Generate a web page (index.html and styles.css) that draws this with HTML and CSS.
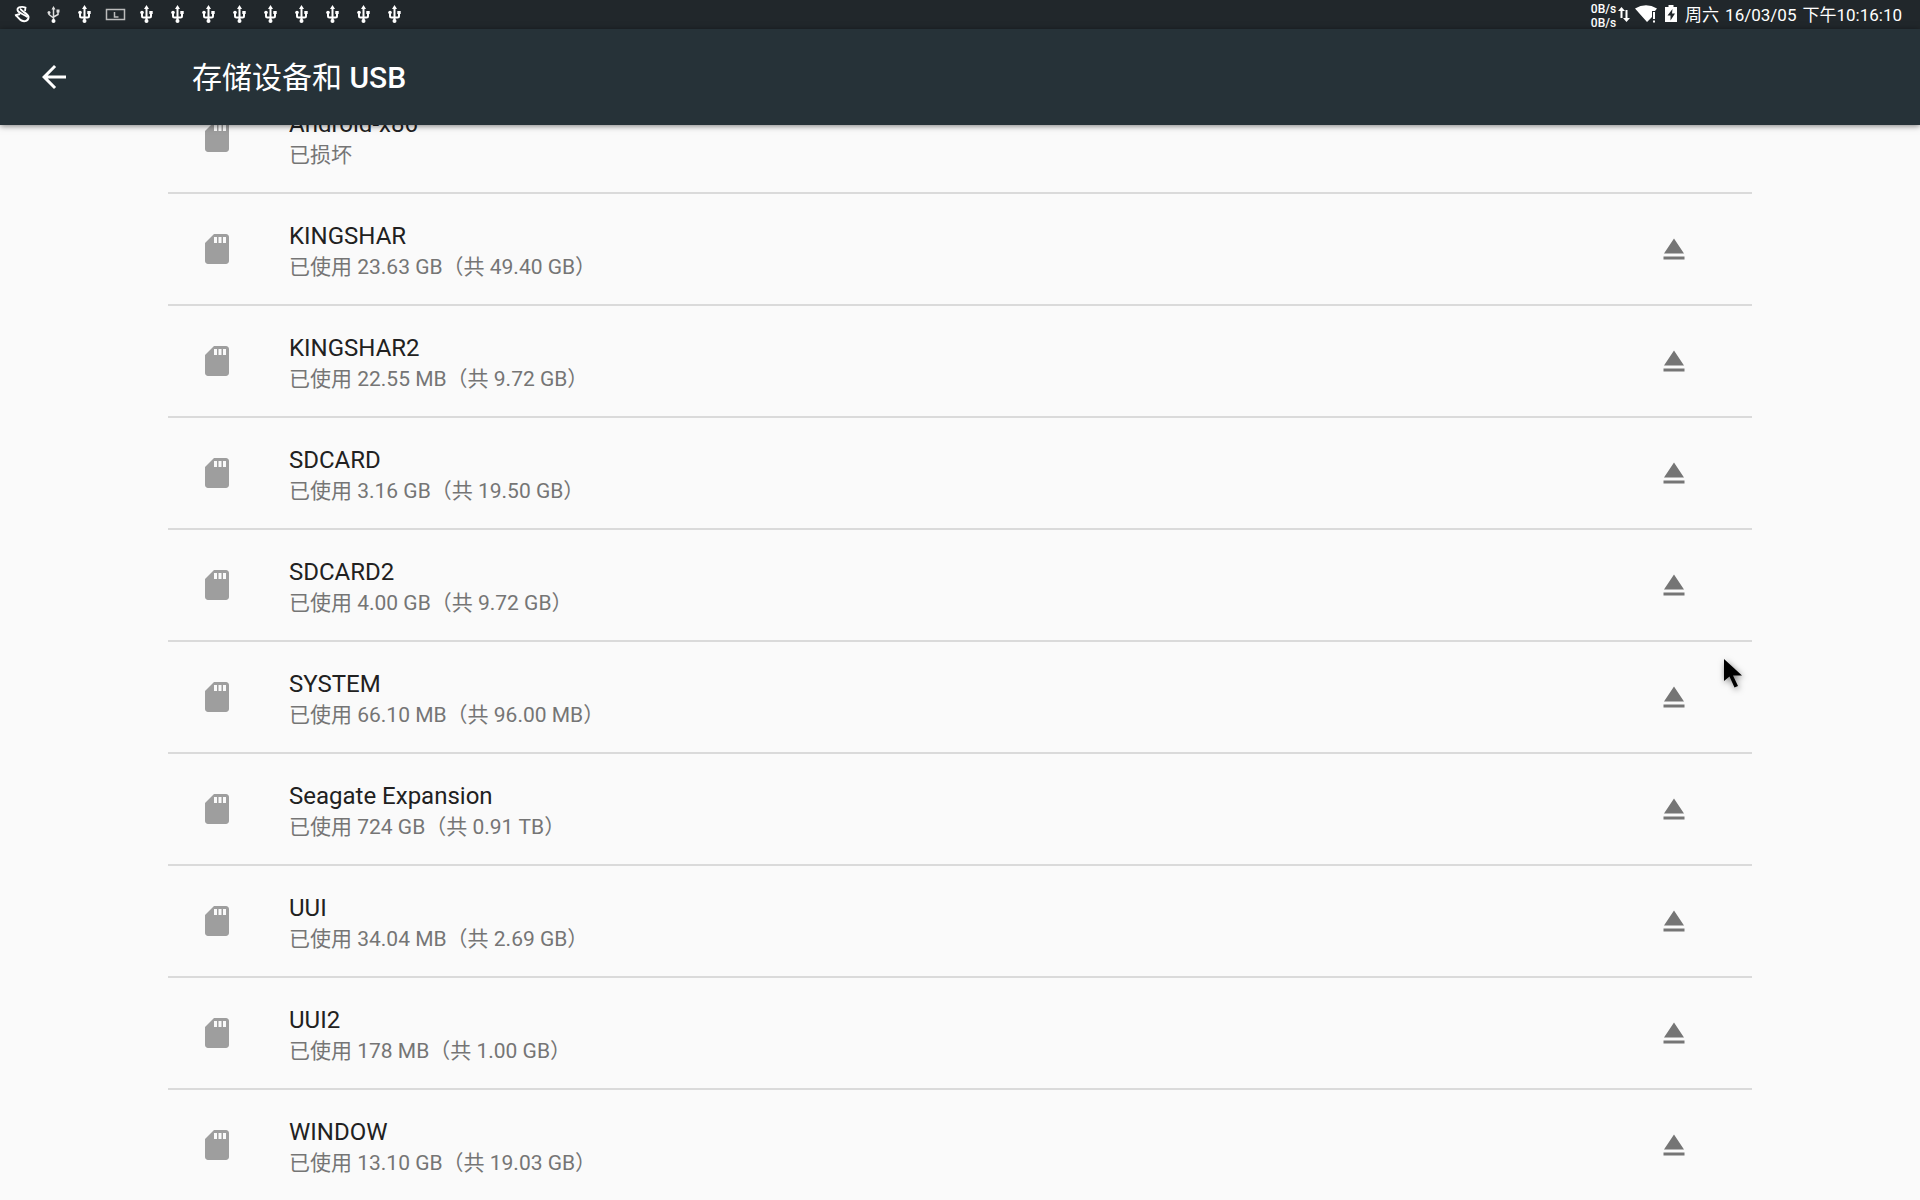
FILE: index.html
```
<!DOCTYPE html>
<html lang="zh-CN">
<head>
  <meta charset="UTF-8">
  <meta name="viewport" content="width=device-width, initial-scale=1">
  <title>存储设备和 USB</title>
  <link rel="stylesheet" href="styles.css">
</head>
<body>

<!-- Shared icons -->
<svg class="hidden">
  <symbol id="usb" viewBox="0 0 24 24">
    <path d="M12.500 5v14M8 9v5q0 1.500 1.500 1.500h6q1.500 0 1.500-1.500v-5" fill="none" stroke="#fff" stroke-width="2"/>
    <path d="M12.500 3l2.500 4h-5z" fill="#fff"/>
    <circle cx="12.500" cy="19" r="2" fill="#fff"/>
    <circle cx="8" cy="10.500" r="1.800" fill="#fff"/>
    <path d="M15.300 9h3.400v3h-3.400z" fill="#fff"/>
  </symbol>
  <symbol id="sd" viewBox="0 0 24 24">
    <path d="M18 2h-8L4.020 8 4 20c0 1.100.9 2 2 2h12c1.100 0 2-.9 2-2V4c0-1.100-.9-2-2-2zm-6 6h-2V4h2v4zm3 0h-2V4h2v4zm3 0h-2V4h2v4z"/>
  </symbol>
  <symbol id="eject" viewBox="0 0 24 24">
    <path d="M5 17h14v2H5zm7-12L5.330 15h13.340z"/>
  </symbol>
</svg>

<div class="status-bar">
  <div class="notifications">
    <svg viewBox="0 0 24 24"><path d="M15 9l.5-3.500C12 4 7 5 7.500 8c.5 3 6 4 10 7" fill="none" stroke="#fff" stroke-width="1.800"/><path d="M11 6.500c-1.500 2 7 5 7.500 8.500 0 4-4 5-7 3.500-2-1-3-3-5-4.500M5 13.500l5-1.500" fill="none" stroke="#fff" stroke-width="2"/></svg>
    <svg viewBox="0 0 24 24"><path d="M12.500 6v13M8 11v1.500l4.500 3.500M17 10v2.500L12.500 15" fill="none" stroke="#ddd" stroke-width="1.500"/><path d="M12.500 4l2 3.500h-4zM15.500 7.500h3v3h-3z" fill="#ddd"/><circle cx="8" cy="10.500" r="1.500" fill="#ddd"/><circle cx="12.500" cy="19" r="2" fill="#fff"/></svg>
    <svg><use href="#usb"/></svg>
    <svg viewBox="0 0 24 24"><path d="M3.500 7.500h18v10h-18zM11.500 10v5h4" fill="none" stroke="#bbb" stroke-width="1.500"/></svg>
    <svg><use href="#usb"/></svg>
    <svg><use href="#usb"/></svg>
    <svg><use href="#usb"/></svg>
    <svg><use href="#usb"/></svg>
    <svg><use href="#usb"/></svg>
    <svg><use href="#usb"/></svg>
    <svg><use href="#usb"/></svg>
    <svg><use href="#usb"/></svg>
    <svg><use href="#usb"/></svg>
  </div>
  <div class="system">
    <div class="speed"><span>0B/s</span><span>0B/s</span></div>
    <svg class="arrows" viewBox="0 0 12 24"><path d="M3.500 18V9M8.500 10v9" stroke="#fff" stroke-width="2"/><path d="M0 11l3.500-4L7 11zM5 18l3.500 4 3.500-4z" fill="#fff"/></svg>
    <svg class="wifi" viewBox="0 0 22 24"><path d="M0 8.500Q11 2 22 8.500l-2 2.500h-3v6l-5 5z" fill="#fff"/><path d="M18 12h2v7h-2zM18 20.500h2v2h-2z" fill="#fff"/></svg>
    <svg class="battery" viewBox="0 0 12 24"><path d="M3.500 5h5v2H12v15H0V7h3.500z" fill="#fff"/><path d="M7.500 9l-5 6.500H5.500v5l4.500-7H7z" fill="#21272b"/></svg>
    <div class="clock"><span>周六</span><span>16/03/05</span><span>下午10:16:10</span></div>
  </div>
</div>

<header class="toolbar">
  <button class="back" aria-label="返回">
    <svg viewBox="0 0 24 24"><path d="M20 11H7.830l5.590-5.590L12 4l-8 8 8 8 1.410-1.410L7.830 13H20v-2z"/></svg>
  </button>
  <h1>存储设备和 <b>USB</b></h1>
</header>

<main class="content">
  <ul class="volumes">
    <li>
      <svg class="sd"><use href="#sd"/></svg>
      <div class="info"><h2>Android-x86</h2><p>已损坏</p></div>
    </li>
    <li>
      <svg class="sd"><use href="#sd"/></svg>
      <div class="info"><h2>KINGSHAR</h2><p>已使用 23.63 GB（共 49.40 GB）</p></div>
      <button class="eject" aria-label="弹出 KINGSHAR"><svg><use href="#eject"/></svg></button>
    </li>
    <li>
      <svg class="sd"><use href="#sd"/></svg>
      <div class="info"><h2>KINGSHAR2</h2><p>已使用 22.55 MB（共 9.72 GB）</p></div>
      <button class="eject" aria-label="弹出 KINGSHAR2"><svg><use href="#eject"/></svg></button>
    </li>
    <li>
      <svg class="sd"><use href="#sd"/></svg>
      <div class="info"><h2>SDCARD</h2><p>已使用 3.16 GB（共 19.50 GB）</p></div>
      <button class="eject" aria-label="弹出 SDCARD"><svg><use href="#eject"/></svg></button>
    </li>
    <li>
      <svg class="sd"><use href="#sd"/></svg>
      <div class="info"><h2>SDCARD2</h2><p>已使用 4.00 GB（共 9.72 GB）</p></div>
      <button class="eject" aria-label="弹出 SDCARD2"><svg><use href="#eject"/></svg></button>
    </li>
    <li>
      <svg class="sd"><use href="#sd"/></svg>
      <div class="info"><h2>SYSTEM</h2><p>已使用 66.10 MB（共 96.00 MB）</p></div>
      <button class="eject" aria-label="弹出 SYSTEM"><svg><use href="#eject"/></svg></button>
    </li>
    <li>
      <svg class="sd"><use href="#sd"/></svg>
      <div class="info"><h2>Seagate Expansion</h2><p>已使用 724 GB（共 0.91 TB）</p></div>
      <button class="eject" aria-label="弹出 Seagate Expansion"><svg><use href="#eject"/></svg></button>
    </li>
    <li>
      <svg class="sd"><use href="#sd"/></svg>
      <div class="info"><h2>UUI</h2><p>已使用 34.04 MB（共 2.69 GB）</p></div>
      <button class="eject" aria-label="弹出 UUI"><svg><use href="#eject"/></svg></button>
    </li>
    <li>
      <svg class="sd"><use href="#sd"/></svg>
      <div class="info"><h2>UUI2</h2><p>已使用 178 MB（共 1.00 GB）</p></div>
      <button class="eject" aria-label="弹出 UUI2"><svg><use href="#eject"/></svg></button>
    </li>
    <li>
      <svg class="sd"><use href="#sd"/></svg>
      <div class="info"><h2>WINDOW</h2><p>已使用 13.10 GB（共 19.03 GB）</p></div>
      <button class="eject" aria-label="弹出 WINDOW"><svg><use href="#eject"/></svg></button>
    </li>
  </ul>
</main>

<!-- Mouse pointer -->
<svg class="pointer" viewBox="0 0 20 32"><path d="M0 0v22l5.500-4.500 5 11 3.500-1.500-5-10.500H18z"/></svg>

</body>
</html>
```

FILE: styles.css
```
* {
  box-sizing: border-box;
}

body {
  font-family: Roboto, "Noto Sans CJK SC", sans-serif;
  background-color: #fafafa;
  color: #212121;
  display: flex;
  flex-direction: column;
  height: 100vh;
  margin: 0;
  overflow: hidden;
}

h1, h2, p, ul {
  margin: 0;
  padding: 0;
}

button {
  background: none;
  border: none;
  padding: 0;
  cursor: pointer;
}

svg {
  display: block;
  flex-shrink: 0;
}

.hidden {
  display: none;
}

/* Status bar */
.status-bar {
  background-color: #21272b;
  color: white;
  display: flex;
  flex-shrink: 0;
  justify-content: space-between;
  height: 29px;
  padding: 0 18px 0 10px;
}

.notifications {
  display: flex;
  align-items: flex-start;
  gap: 7px;
  padding-top: 2px;
}

.notifications svg {
  width: 24px;
  height: 24px;
}

.system {
  display: flex;
  align-items: flex-start;
}

.system svg {
  height: 24px;
}

.speed {
  display: flex;
  flex-direction: column;
  font-size: 12px;
  font-weight: 500;
  line-height: 14px;
  padding-top: 2px;
}

.arrows {
  width: 12px;
  margin: 0 5px 0 2px;
}

.wifi {
  width: 22px;
}

.battery {
  width: 12px;
  margin: 0 8px;
}

.clock {
  display: flex;
  gap: 6px;
  font-size: 17px;
  line-height: 30px;
}

/* Toolbar */
.toolbar {
  background-color: #263238;
  box-shadow: 0 1px 6px rgba(0, 0, 0, 0.5);
  color: white;
  display: flex;
  flex-shrink: 0;
  align-items: center;
  height: 96px;
  padding-left: 36px;
  position: relative;
  z-index: 1;
}

.back {
  margin-right: 120px;
}

.back svg {
  width: 36px;
  height: 36px;
  fill: white;
}

h1 {
  font-size: 30px;
  font-weight: 400;
  line-height: 36px;
  padding-top: 2px;
}

h1 b {
  font-weight: 500;
}

/* Volume list, scrolled down */
.content {
  flex: 1;
  min-height: 0;
  overflow: hidden;
  padding: 0 168px;
}

.volumes {
  list-style: none;
  margin-top: -43px;
}

.volumes li {
  border-bottom: 2px solid #dadada;
  display: flex;
  align-items: center;
  height: 112px;
  padding: 0 60px 0 31px;
}

.sd {
  width: 36px;
  height: 36px;
  margin-right: 54px;
  fill: #9e9e9e;
}

.info {
  flex: 1;
  padding-top: 4px;
}

h2 {
  font-size: 24px;
  font-weight: 400;
  line-height: 32px;
}

.info p {
  color: #757575;
  font-size: 21px;
  line-height: 30px;
}

.eject svg {
  width: 36px;
  height: 36px;
  fill: #757575;
}

.pointer {
  position: absolute;
  left: 1724px;
  top: 659px;
  width: 20px;
  height: 32px;
  overflow: visible;
  filter: drop-shadow(1px 2px 3px rgba(0, 0, 0, 0.5));
  z-index: 2;
}
```
